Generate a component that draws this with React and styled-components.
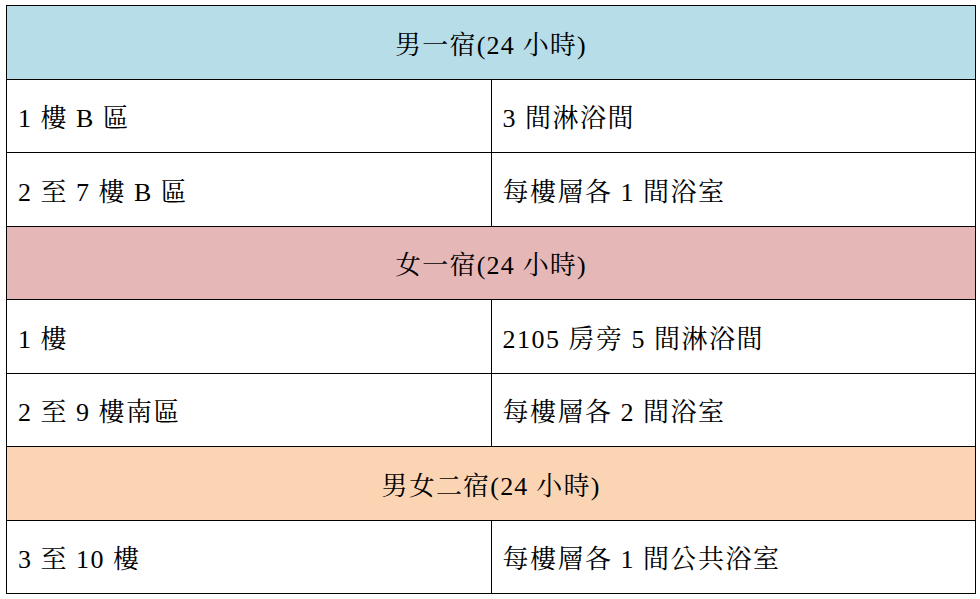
import React from 'react'
import styled, { createGlobalStyle } from 'styled-components'

const serif = '"Liberation Serif", "Noto Serif CJK TC", serif'

const GlobalStyle = createGlobalStyle`
  html, body {
    margin: 0;
    padding: 0;
    background: #fff;
  }
  body {
    font-family: ${serif};
    color: #000;
  }
`

const Page = styled.div`
  padding: 5px 0 0 6px;
`

const Table = styled.table`
  width: 970px;
  border-collapse: collapse;
  table-layout: fixed;
  font-family: ${serif};
`

const Row = styled.tr`
  height: 73.5px;
`

const Heading = styled.td`
  border: 1px solid #000;
  background: ${p => p.$bg};
  text-align: center;
  font-family: ${serif};
  font-size: 26px;
  letter-spacing: 1.2px;
  padding: 0;
`

const Cell = styled.td`
  border: 1px solid #000;
  width: ${p => (p.$left ? '484px' : 'auto')};
  padding: 0 11px;
  font-family: ${serif};
  font-size: 26px;
  letter-spacing: 1.5px;
`

const sections = [
  {
    title: '男一宿(24 小時)',
    bg: '#b7dde8',
    rows: [
      ['1 樓 B 區', '3 間淋浴間'],
      ['2 至 7 樓 B 區', '每樓層各 1 間浴室'],
    ],
  },
  {
    title: '女一宿(24 小時)',
    bg: '#e5b8b7',
    rows: [
      ['1 樓', '2105 房旁 5 間淋浴間'],
      ['2 至 9 樓南區', '每樓層各 2 間浴室'],
    ],
  },
  {
    title: '男女二宿(24 小時)',
    bg: '#fbd4b4',
    rows: [['3 至 10 樓', '每樓層各 1 間公共浴室']],
  },
]

export default function App() {
  return (
    <Page>
      <GlobalStyle />
      <Table>
        <tbody>
          {sections.map(s => (
            <React.Fragment key={s.title}>
              <Row>
                <Heading colSpan={2} $bg={s.bg}>{s.title}</Heading>
              </Row>
              {s.rows.map(([a, b]) => (
                <Row key={a}>
                  <Cell $left>{a}</Cell>
                  <Cell>{b}</Cell>
                </Row>
              ))}
            </React.Fragment>
          ))}
        </tbody>
      </Table>
    </Page>
  )
}
